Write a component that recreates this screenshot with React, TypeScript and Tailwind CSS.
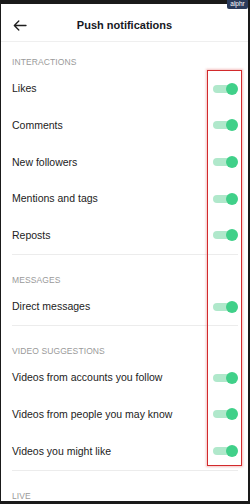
import React from "react";

type Section = { title: string; rows: string[]; first?: boolean };

const sections: Section[] = [
  { title: "INTERACTIONS", rows: ["Likes", "Comments", "New followers", "Mentions and tags", "Reposts"], first: true },
  { title: "MESSAGES", rows: ["Direct messages"] },
  {
    title: "VIDEO SUGGESTIONS",
    rows: ["Videos from accounts you follow", "Videos from people you may know", "Videos you might like"],
  },
  { title: "LIVE", rows: [] },
];

function Toggle() {
  return (
    <div className="relative w-[25px] h-[12px] flex items-center">
      <div className="w-[24px] h-[8px] rounded-full bg-[#b0e8cb]" />
      <div className="absolute right-0 top-0 w-[12px] h-[12px] rounded-full bg-[#40d089]" />
    </div>
  );
}

export default function App() {
  return (
    <div
      className="relative w-[250px] h-[504px] bg-[#1a1a1a] overflow-hidden flex flex-col"
      style={{ fontFamily: '"Liberation Sans", Arial, sans-serif' }}
    >
      <div className="mt-[4px] ml-[1px] mr-[2px] mb-[3px] flex-1 bg-white flex flex-col overflow-hidden">
        <div className="h-[37.7px] pt-[5px] flex items-center relative border-b border-[#efefef] shrink-0">
          <svg className="absolute left-[12px] top-[15.5px]" width="14" height="11" viewBox="0 0 14 11" fill="none">
            <path d="M13 5.5H1.5M5.8 1L1.3 5.5L5.8 10" stroke="#1e1e1e" strokeWidth="1.3" strokeLinecap="round" strokeLinejoin="round" />
          </svg>
          <div className="w-full text-center text-[11px] font-bold text-[#161823]">Push notifications</div>
        </div>
        {sections.map((s, i) => (
          <div key={s.title} className="shrink-0">
            <div className={s.first ? "pt-[11.2px]" : "pt-[13.7px]"}>
              <div className="h-[17.3px] flex items-center pl-[11px] pt-[1px] text-[8.5px] text-[#9a9a9a] tracking-[0.1px]">
                {s.title}
              </div>
              {s.rows.map((r) => (
                <div key={r} className="h-[36.7px] flex items-center justify-between pl-[11px] pr-[10px]">
                  <span className="text-[10.5px] text-[#222222] pt-[1px]">{r}</span>
                  <Toggle />
                </div>
              ))}
            </div>
            {i < sections.length - 1 && (
              <div className="pb-[2.6px]">
                <div className="ml-[11px] mr-[10px] border-b border-[#ececec]" />
              </div>
            )}
          </div>
        ))}
      </div>
      <div className="absolute left-[207px] top-[70px] w-[35px] h-[396px] border-[1.5px] border-[#d22a2c] shadow-[0_0_2px_1px_rgba(230,120,120,0.45)]" />
      <div className="absolute top-0 right-[2px] w-[21px] h-[9px] bg-[#2b3b5b] rounded-b-[2px] flex items-center justify-center text-[6.5px] leading-none text-white">
        alphr
      </div>
    </div>
  );
}
